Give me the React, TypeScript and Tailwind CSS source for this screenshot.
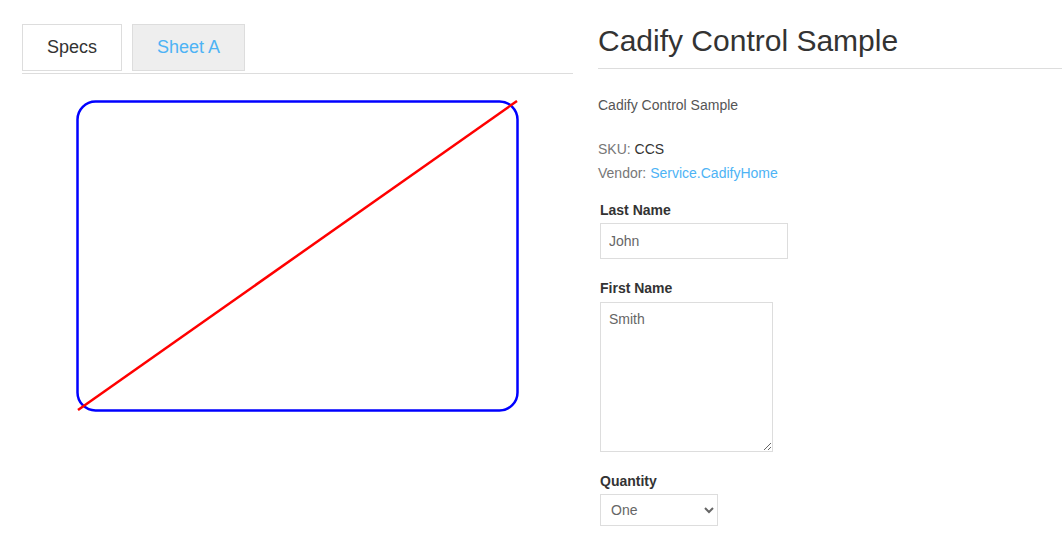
import React from 'react';

export default function App() {
  return (
    <div className="flex w-[1062px] h-[538px] overflow-hidden bg-white pt-[24px] font-['Liberation_Sans',Arial,sans-serif] text-[#333]">
      {/* Left column: tabs + drawing */}
      <div className="ml-[22px] w-[551px] shrink-0">
        <div className="flex gap-[10px] border-b border-[#ddd]">
          <div className="mb-[2px] flex h-[47px] w-[100px] items-center justify-center border border-[#ddd] text-[18px] text-[#333]">
            Specs
          </div>
          <div className="mb-[2px] flex h-[47px] w-[113px] items-center justify-center border border-[#ddd] bg-[#eee] text-[18px] text-[#4db3f5]">
            Sheet A
          </div>
        </div>

        <svg className="ml-[54px] mt-[26px] block" width="443" height="313" viewBox="0 0 443 313">
          <rect x="1.5" y="1.5" width="440" height="309" rx="18" fill="none" stroke="#0000ff" strokeWidth="2.5" />
          <line x1="2" y1="310" x2="441" y2="1" stroke="#ff0000" strokeWidth="2.5" />
        </svg>
      </div>

      {/* Right column: product details + form */}
      <div className="ml-[25px] flex-1">
        <h1 className="border-b border-[#ddd] pb-[11px] text-[30px] leading-[33px] text-[#333]">
          Cadify Control Sample
        </h1>

        <p className="mt-[26px] text-[14px] leading-[20px] text-[#555]">Cadify Control Sample</p>

        <div className="mt-[22px] text-[14px] leading-[24px]">
          <div className="text-[#777]">
            SKU: <span className="text-[#333]">CCS</span>
          </div>
          <div className="text-[#777]">
            Vendor: <a className="text-[#4db3f5]">Service.CadifyHome</a>
          </div>
        </div>

        <form className="ml-[2px] mt-[15px] text-[14px]">
          <label className="block font-bold leading-[20px] text-[#333]">Last Name</label>
          <input
            defaultValue="John"
            className="mt-[3px] block h-[36px] w-[188px] border border-[#ddd] px-[8px] text-[14px] text-[#666] outline-none"
          />

          <label className="mt-[19px] block font-bold leading-[20px] text-[#333]">First Name</label>
          <textarea
            defaultValue="Smith"
            className="mt-[4px] block h-[150px] w-[173px] border border-[#ddd] px-[8px] py-[6px] text-[14px] leading-[20px] text-[#666] outline-none"
          />

          <label className="mt-[19px] block font-bold leading-[20px] text-[#333]">Quantity</label>
          <select className="mt-[3px] block h-[32px] w-[118px] border border-[#ddd] bg-white px-[6px] text-[14px] text-[#666] outline-none">
            <option>One</option>
            <option>Two</option>
            <option>Three</option>
          </select>
        </form>
      </div>
    </div>
  );
}
